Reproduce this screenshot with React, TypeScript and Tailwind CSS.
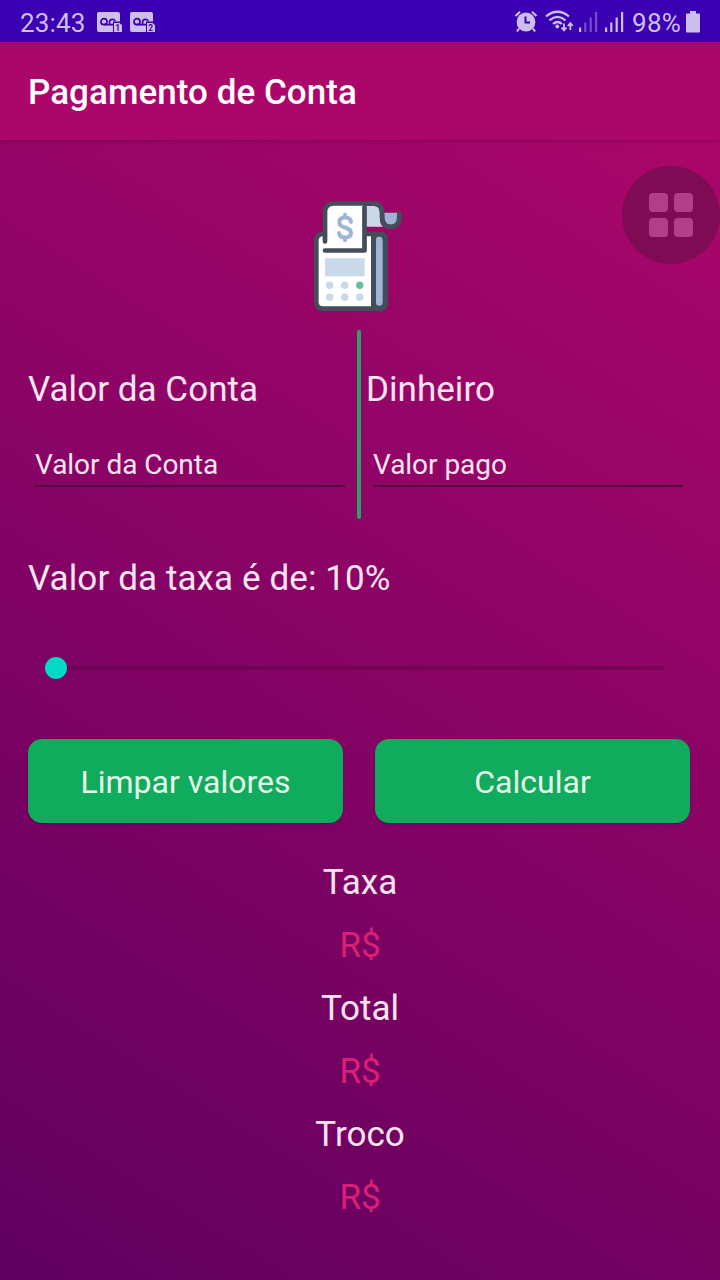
import React from "react";

function Voicemail({ n }: { n: string }) {
  return (
    <svg className="h-[21px] w-[26px]" viewBox="0 0 26 21">
      <path d="M2 0H21Q23 0 23 2V9.500H16V20H2Q0 20 0 18V2Q0 0 2 0Z" fill="#cdbfed" />
      <g fill="none" stroke="#3a00b2" strokeWidth="1.7">
        <circle cx="7" cy="9.700" r="3" />
        <path d="M7 12.700H16M13 12A3 3 0 1 1 18.300 9.300" />
      </g>
      <path d="M17 11H22.500L25 13.200V20H17Z" fill="#cdbfed" />
      <text x="20.8" y="18.8" textAnchor="middle" fontSize="8.5" fontWeight="700" fontFamily="Roboto, sans-serif" fill="#3a00b2">{n}</text>
    </svg>
  );
}

function AlarmIcon() {
  return (
    <svg className="h-[23px] w-[24px]" viewBox="0 0 24 23">
      <circle cx="12" cy="12" r="9.4" fill="#cdbfed" />
      <path d="M1.500 6L6 1.800M22.500 6L18 1.800M5 18.500L3 21.500M19 18.500L21 21.500" stroke="#cdbfed" strokeWidth="2.2" fill="none" />
      <path d="M11.500 6.500V12.500H16" stroke="#3a00b2" strokeWidth="2" fill="none" />
    </svg>
  );
}

function WifiIcon() {
  return (
    <svg className="h-[23px] w-[29px]" viewBox="0 0 29 23">
      <g fill="none" stroke="#cdbfed" strokeWidth="2.2">
        <path d="M1 6.500Q12.500 -3 24 6.500M4.500 10.300Q12.500 3.500 20.500 10.300M8 14Q12.500 10 17 14" />
        <path d="M19 13.500V20M16.500 17.500L19 20.300L21.500 17.500M25.300 20V13.500M22.800 16L25.300 13.200L27.800 16" strokeWidth="1.8" />
      </g>
      <circle cx="12.3" cy="16.500" r="1.900" fill="#cdbfed" />
    </svg>
  );
}

function Signal({ weak = false }: { weak?: boolean }) {
  return (
    <svg className="h-[20px] w-[19px]" viewBox="0 0 19 20">
      <g fill="#cdbfed">
        <rect x="0" y="15.5" width="2.2" height="4.5" />
        <g opacity={weak ? 0.4 : 1}>
          <rect x="5.2" y="10.5" width="2.2" height="9.5" />
          <rect x="10.6" y="5.5" width="2.2" height="14.5" />
          <rect x="16" y="0" width="2.2" height="20" />
        </g>
      </g>
    </svg>
  );
}

function Register() {
  return (
    <svg className="h-[113px] w-[90px]" viewBox="0 0 90 113">
      <rect x="3.300" y="34" width="69" height="74.600" rx="5" fill="#fff" />
      <path d="M58 31.700H68Q74.700 31.700 74.700 38V104Q74.700 111 68 111H58Z" fill="#464d5a" />
      <rect x="63" y="36.500" width="6.700" height="69.300" rx="3.300" fill="#9db6d3" />
      <path d="M12 50V11Q12 3.500 19 3.500H51V50Z" fill="#fff" />
      <path d="M53 6H61Q67 6 67 13V20Q67 24 70 26.700H53Z" fill="#c8d9e9" />
      <path d="M71.300 12.700H85V18Q84 25 77.500 25Q71.300 24 71.300 17Z" fill="#9db6d3" />
      <g fill="none" stroke="#464d5a" strokeWidth="4.7" strokeLinecap="round" strokeLinejoin="round">
        <path d="M12 41.500V12.500Q12 3.500 21 3.500H60Q69 3.500 69 12.500V17Q69.500 26.800 77.700 26.800Q86.300 26.800 86.300 17V13.500" />
        <path d="M10 34Q3.300 34 3.300 41V102Q3.300 108.600 10 108.600H66Q72.300 108.600 72.300 102V41Q72.300 34 65 34H53" />
        <path d="M51.500 7V50.500H12" />
      </g>
      <rect x="12" y="58.300" width="39.700" height="18" fill="#c8d9e9" />
      <g fill="#c8d9e9">
        <circle cx="16.700" cy="85.300" r="3.700" />
        <circle cx="31.700" cy="85.300" r="3.700" />
        <circle cx="16.700" cy="97.300" r="3.700" />
        <circle cx="31.700" cy="97.300" r="3.700" />
        <circle cx="46.700" cy="97.300" r="3.700" />
      </g>
      <circle cx="46.700" cy="85.300" r="3.700" fill="#6abfa3" />
      <path d="M38 22Q37.500 17.500 32 17.500Q26.300 17.500 26.300 22.300Q26.300 26 32 27.500Q38 29 38 33Q38 37.500 32 37.500Q26.500 37.500 26 33M32 14.800V17M32 38V40.200" fill="none" stroke="#9db6d3" strokeWidth="4" strokeLinecap="round" />
    </svg>
  );
}

function Field({ label, placeholder, first }: { label: string; placeholder: string; first?: boolean }) {
  return (
    <div className={first ? "flex w-[329px] flex-col" : "flex w-[331px] flex-col pl-[5px]"}>
      <div className="mt-[39px] h-[41px] text-[35px] leading-[41px] tracking-[0.04px]">{label}</div>
      <div className="mt-[38px] ml-[7px] flex h-[39px] w-[310px] items-start border-b-2 border-[#53053f] text-[28px] leading-[34px] tracking-[-0.04px]">
        {placeholder}
      </div>
    </div>
  );
}

function Result({ label }: { label: string }) {
  return (
    <div className="flex flex-col items-center text-[35px] leading-[63px]">
      <div>{label}</div>
      <div className="text-[#dc1f74]">R$</div>
    </div>
  );
}

const button =
  "flex h-[84px] w-[315px] items-center justify-center rounded-[14px] bg-[#10ab5c] pt-[1px] text-[32px] leading-[38px] text-[#e7f7e9] shadow-[0_1px_2px_rgba(0,0,0,0.25)]";

export default function App() {
  return (
    <div className="relative flex h-[1280px] w-[720px] flex-col overflow-hidden font-[Roboto,sans-serif] text-[#ffe4f2]">
      <header className="flex h-[42px] shrink-0 items-center bg-[#3a00b2] px-[20px] text-[26px] text-[#cdbfed]">
        <span className="mt-[4px] w-[77px] tracking-[0.15px]">23:43</span>
        <div className="mt-[3px] flex gap-[7px]">
          <Voicemail n="1" />
          <Voicemail n="2" />
        </div>
        <div className="ml-auto flex items-center">
          <AlarmIcon />
          <div className="ml-[7px]"><WifiIcon /></div>
          <div className="ml-[5px] mt-[2px]"><Signal weak /></div>
          <div className="ml-[7px] mt-[2px]"><Signal /></div>
          <span className="mt-[4px] ml-[8px] w-[54px] tracking-[0.3px]">98%</span>
          <svg className="mt-[2px] h-[22px] w-[14px]" viewBox="0 0 14 22">
            <path d="M4 0H10V2.500H13Q14 2.500 14 3.500V20.500Q14 21.500 13 21.500H1Q0 21.500 0 20.500V3.500Q0 2.500 1 2.500H4Z" fill="#cdbfed" />
          </svg>
        </div>
      </header>
      <div className="z-10 flex h-[98px] shrink-0 items-center bg-[#ab066a] pl-[28px] pt-[4px] text-[35px] font-medium tracking-[0.04px] text-white shadow-[0_1px_5px_rgba(0,0,0,0.2)]">
        Pagamento de Conta
      </div>
      <main className="flex flex-1 flex-col bg-[linear-gradient(32.3deg,#5f005f_0%,#ab066a_100%)] px-[28px]">
        <div className="mt-[60px] ml-[285px] h-[113px]"><Register /></div>
        <div className="mt-[17px] flex h-[189px]">
          <Field label="Valor da Conta" placeholder="Valor da Conta" first />
          <div className="h-[189px] w-[4px] rounded-[2px] bg-[#2da066]" />
          <Field label="Dinheiro" placeholder="Valor pago" />
        </div>
        <div className="mt-[39px] h-[41px] text-[35px] leading-[41px] tracking-[0.1px]">Valor da taxa é de: 10%</div>
        <div className="mt-[58px] ml-[17px] flex h-[22px] items-center">
          <div className="size-[22px] rounded-full bg-[#03dac5]" />
          <div className="h-[4px] w-[597px] bg-black/15" />
        </div>
        <div className="mt-[60px] flex gap-[32px]">
          <div className={button}>Limpar valores</div>
          <div className={button}>Calcular</div>
        </div>
        <div className="mt-[28px] flex flex-col">
          <Result label="Taxa" />
          <Result label="Total" />
          <Result label="Troco" />
        </div>
      </main>
      <div className="absolute left-[622px] top-[166px] z-20 grid size-[98px] grid-cols-[19px_19px] place-content-center gap-[6px] rounded-full bg-[#800b55] pr-[1px] pb-[1px]">
        <div className="size-[19px] rounded-[4px] bg-[#b23e88]" />
        <div className="size-[19px] rounded-[4px] bg-[#b23e88]" />
        <div className="size-[19px] rounded-[4px] bg-[#b23e88]" />
        <div className="size-[19px] rounded-[4px] bg-[#b23e88]" />
      </div>
    </div>
  );
}
